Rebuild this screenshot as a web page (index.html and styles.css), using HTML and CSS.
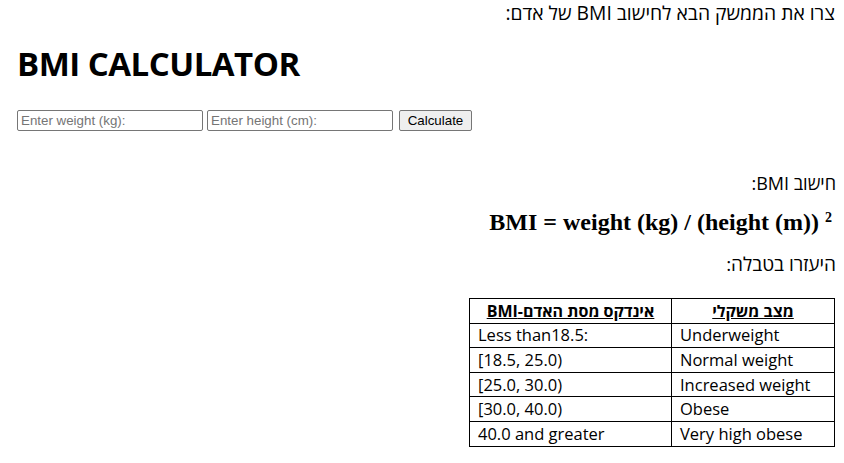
FILE: index.html
```html
<!DOCTYPE html>
<html lang="he">
<head>
<meta charset="utf-8">
<link rel="stylesheet" href="styles.css">
</head>
<body>
<div class="intro" dir="rtl">צרו את הממשק הבא לחישוב BMI של אדם:</div>
<h1 class="title">BMI CALCULATOR</h1>
<div class="form">
  <input class="field" type="text" placeholder="Enter weight (kg):">
  <input class="field" type="text" placeholder="Enter height (cm):">
  <button class="btn">Calculate</button>
</div>
<div class="calc" dir="rtl">חישוב BMI:</div>
<div class="formula">BMI = weight (kg) / (height (m)) <sup>2</sup></div>
<div class="help" dir="rtl">היעזרו בטבלה:</div>
<div class="table-wrap">
<table class="bmi" dir="rtl">
  <tr><th>מצב משקלי</th><th>אינדקס מסת האדם-BMI</th></tr>
  <tr><td>Underweight</td><td>Less than18.5:</td></tr>
  <tr><td>Normal weight</td><td>[18.5, 25.0)</td></tr>
  <tr><td>Increased weight</td><td>[25.0, 30.0)</td></tr>
  <tr><td>Obese</td><td>[30.0, 40.0)</td></tr>
  <tr><td>Very high obese</td><td>40.0 and greater</td></tr>
</table>
</div>
</body>
</html>
```
FILE: styles.css
```css
html, body { margin: 0; padding: 0; background: #fff; }
body {
  font-family: "Open Sans", "DejaVu Sans", sans-serif;
  color: #000;
  width: 844px;
}
.intro {
  font-size: 19.3px;
  line-height: 26px;
  padding: 0 9px 0 0;
  margin: 0;
}
.title {
  font-family: "Open Sans", sans-serif;
  font-weight: 700;
  font-size: 33px;
  line-height: 40px;
  margin: 18px 0 0 17px;
  letter-spacing: -0.5px;
}
.form {
  display: flex;
  gap: 5px;
  margin: 26px 0 0 17px;
  align-items: center;
}
.field {
  box-sizing: border-box;
  width: 186px;
  height: 21px;
  border: 1px solid #767676;
  border-radius: 2px;
  padding: 1px 3px;
  font-family: "Liberation Sans", Arial, sans-serif;
  font-size: 13.33px;
  margin: 0;
}
.field + .field { margin-left: -1px; }
.field::placeholder { color: #757575; }
.btn {
  box-sizing: border-box;
  width: 73px;
  height: 21px;
  padding: 0;
  margin-left: 1px;
  font-family: "Liberation Sans", Arial, sans-serif;
  font-size: 13.33px;
  background: #efefef;
  border: 1px solid #767676;
  border-radius: 2px;
  color: #000;
}
.calc {
  font-size: 18px;
  line-height: 22px;
  margin-top: 41px;
  padding-right: 8px;
}
.formula {
  font-family: "Liberation Serif", "Times New Roman", serif;
  font-weight: 700;
  font-size: 24px;
  text-align: right;
  padding-right: 12px;
  margin-top: 14px;
  line-height: 28px;
}
.formula sup { font-size: 14px; vertical-align: 8px; line-height: 0; }
.help {
  font-size: 19px;
  line-height: 22px;
  margin-top: 17px;
  padding-right: 8px;
}
.table-wrap {
  display: flex;
  justify-content: flex-end;
  padding-right: 9px;
  margin-top: 23px;
}
.bmi {
  border-collapse: collapse;
  font-family: "Open Sans", sans-serif;
  font-size: 16.5px;
}
.bmi th, .bmi td {
  border: 1px solid #000;
  height: 24.6px;
  padding: 0 8px;
  line-height: 22px;
  box-sizing: border-box;
}
.bmi th {
  font-weight: 700;
  text-decoration: underline;
  text-align: center;
  font-size: 16px;
}
.bmi td { text-align: left; direction: ltr; }
.bmi th:first-child, .bmi td:first-child { width: 163px; }
.bmi th:last-child, .bmi td:last-child { width: 202px; }
```
